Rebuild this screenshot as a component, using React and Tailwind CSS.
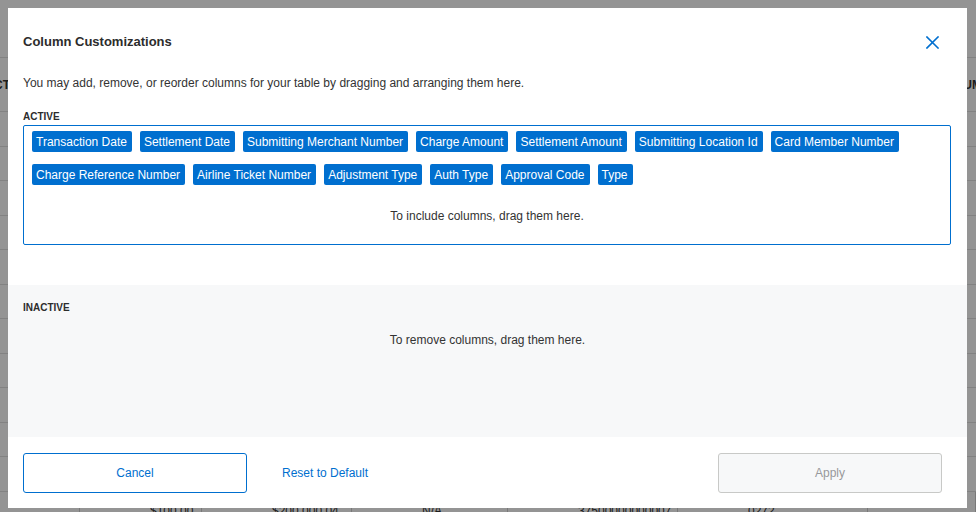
import React from "react";

const activeColumns = [
  "Transaction Date",
  "Settlement Date",
  "Submitting Merchant Number",
  "Charge Amount",
  "Settlement Amount",
  "Submitting Location Id",
  "Card Member Number",
  "Charge Reference Number",
  "Airline Ticket Number",
  "Adjustment Type",
  "Auth Type",
  "Approval Code",
  "Type",
];

const bottomCells = [
  { w: "w-[80px]", text: "" },
  { w: "w-[122px]", text: "$100.00" },
  { w: "w-[150px]", text: "$200,000.04" },
  { w: "w-[156px]", text: "N/A" },
  { w: "w-[170px]", text: "37500000000007" },
  { w: "w-[190px]", text: "0272" },
  { w: "w-[108px]", text: "" },
];

function BackgroundTable() {
  return (
    <div className="bg-white text-[12px] text-[#333]">
      <div className="h-[58px] border-b border-[#e0e0e0]" />
      <div className="h-[54px] flex items-center justify-between border-b border-[#e0e0e0] font-bold">
        <span className="-ml-[6px]">CT</span>
        <span className="-mr-[6px]">NUM</span>
      </div>
      {Array.from({ length: 11 }).map((_, i) => (
        <div key={i} className="h-[34.5px] border-b border-[#e0e0e0]" />
      ))}
      <div className="flex h-[40px]">
        {bottomCells.map((c, i) => (
          <div
            key={i}
            className={`${c.w} shrink-0 border-r border-[#d0d0d0] pt-[10px] pl-[70px] whitespace-nowrap overflow-hidden`}
          >
            {c.text}
          </div>
        ))}
      </div>
    </div>
  );
}

function CloseIcon() {
  return (
    <svg width="13" height="13" viewBox="0 0 13 13" fill="none">
      <path
        d="M1 1L12 12M12 1L1 12"
        stroke="#006fcf"
        strokeWidth="1.6"
        strokeLinecap="square"
      />
    </svg>
  );
}

export default function App() {
  return (
    <div
      className="relative h-[512px] w-[976px] overflow-hidden"
      style={{ fontFamily: '"Liberation Sans", Arial, sans-serif' }}
    >
      <BackgroundTable />

      {/* Overlay */}
      <div className="absolute inset-0 bg-black/[0.42] pt-2 pl-2">
        {/* Modal */}
        <div className="w-[959px] h-[500px] bg-white flex flex-col text-[#333]">
          {/* Header */}
          <div className="flex items-center justify-between pt-[26px] pl-[15px] pr-[28px]">
            <h2 className="text-[13px] leading-4 font-bold text-[#2c2c2c]">
              Column Customizations
            </h2>
            <button className="flex items-center">
              <CloseIcon />
            </button>
          </div>

          <p className="mt-[25px] pl-[15px] text-[12px] leading-4">
            You may add, remove, or reorder columns for your table by dragging
            and arranging them here.
          </p>

          {/* Active */}
          <div className="px-[15px] pr-4">
            <div className="mt-[19px] text-[10px] leading-[14px] font-bold text-[#2c2c2c]">
              ACTIVE
            </div>
            <div className="mt-[1px] h-[120px] border border-[#006fcf] rounded-[2px] pt-[5px] px-2">
              <div className="flex flex-wrap gap-x-2 gap-y-3">
                {activeColumns.map((col) => (
                  <span
                    key={col}
                    className="h-[21px] flex items-center pl-1 pr-[5px] bg-[#006fcf] text-white text-[12px] rounded-[2px] whitespace-nowrap"
                  >
                    {col}
                  </span>
                ))}
              </div>
              <p className="mt-[23px] text-center text-[12px] leading-4">
                To include columns, drag them here.
              </p>
            </div>
          </div>

          {/* Inactive */}
          <div className="mt-10 h-[152px] bg-[#f7f8f9] px-[15px] pt-4">
            <div className="text-[10px] leading-[14px] font-bold text-[#2c2c2c]">
              INACTIVE
            </div>
            <p className="mt-[17px] text-center text-[12px] leading-4">
              To remove columns, drag them here.
            </p>
          </div>

          {/* Footer */}
          <div className="flex items-center pt-4 pl-[15px] pr-[25px]">
            <button className="w-[224px] h-[40px] border border-[#006fcf] rounded-[3px] text-[12px] text-[#006fcf]">
              Cancel
            </button>
            <button className="ml-[35px] text-[12px] text-[#006fcf]">
              Reset to Default
            </button>
            <button className="ml-auto w-[224px] h-[40px] border border-[#c8c9c7] rounded-[3px] bg-[#f7f8f9] text-[12px] text-[#97999b]">
              Apply
            </button>
          </div>
        </div>
      </div>
    </div>
  );
}
